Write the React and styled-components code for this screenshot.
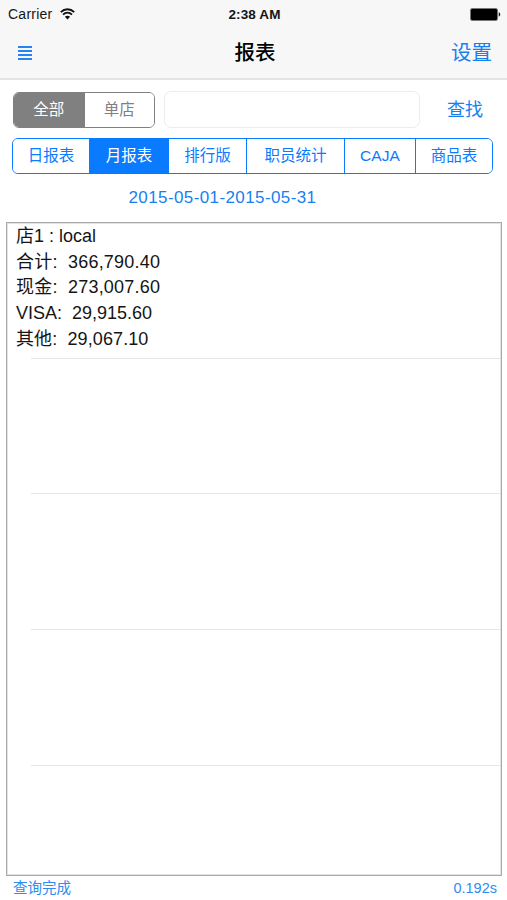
import React, {useState} from 'react';
import styled, {createGlobalStyle} from 'styled-components';

const GlobalStyle = createGlobalStyle`
    * {
        box-sizing: border-box;
    }

    body {
        margin: 0;
        background: #fff;
        font-family: "Liberation Sans", "Noto Sans CJK SC", sans-serif;
        color: #151515;
    }

    button, input {
        font-family: inherit;
        padding: 0;
        margin: 0;
    }
`

const Screen = styled.div`
    width: 507px;
    height: 900px;
    display: flex;
    flex-direction: column;
    overflow: hidden;
`

const Header = styled.header`
    height: 80px;
    flex: none;
    background: #f7f7f7;
    border-bottom: 2px solid #e4e4e4;
`

const StatusBar = styled.div`
    height: 28px;
    padding: 0 6px 0 8px;
    display: grid;
    grid-template-columns: 1fr auto 1fr;
    align-items: center;
    font-size: 14px;
`

const Carrier = styled.div`
    display: flex;
    align-items: center;
    gap: 7px;
    letter-spacing: 0.25px;
`

const Clock = styled.div`
    font-weight: bold;
    font-size: 13.5px;
    letter-spacing: 0.1px;
`

const BatteryCont = styled.div`
    display: flex;
    justify-content: flex-end;
`

const NavBar = styled.nav`
    height: 50px;
    padding: 0 15px 0 18px;
    display: grid;
    grid-template-columns: 1fr auto 1fr;
    align-items: center;
`

const MenuButton = styled.button`
    width: 14px;
    height: 14px;
    border: 0;
    background: none;
    line-height: 0;
`

const Title = styled.h1`
    margin: 0;
    font-size: 20.5px;
    font-weight: 500;
    line-height: 30px;
    color: #000;
`

const TextButton = styled.button`
    border: 0;
    background: none;
    color: #187ff0;
    font-size: ${props => props.$size}px;
    line-height: 30px;
    justify-self: end;
`

const SearchRow = styled.div`
    height: 37px;
    margin: 11px 24px 10px 13px;
    display: flex;
    align-items: center;
    flex: none;
`

const Segments = styled.div`
    display: flex;
    flex: none;
    width: ${props => props.$width}px;
    height: ${props => props.$height}px;
    border: 1.5px solid ${props => props.$tint};
    border-radius: 6px;
    overflow: hidden;
`

const Segment = styled.button`
    flex: ${props => props.$width} 1 0;
    border: 0;
    border-left: ${props => props.$first ? 0 : 1}px solid ${props => props.$tint};
    background: ${props => props.$active ? props.$tint : '#fff'};
    color: ${props => props.$active ? '#fff' : props.$tint};
    font-size: 15.5px;
    line-height: 22px;
    white-space: nowrap;
`

const SearchInput = styled.input`
    width: 256px;
    height: 37px;
    margin-left: 9px;
    border: 1px solid #ececec;
    border-radius: 7px;
    background: #fff;
    outline: none;
`

const SearchButton = styled(TextButton)`
    margin-left: auto;
`

const TabsCont = styled.div`
    padding-left: 12px;
`

const DateRange = styled.div`
    height: 48px;
    padding-right: 62px;
    flex: none;
    display: flex;
    align-items: center;
    justify-content: center;
    color: #187ff0;
    font-size: 17px;
    letter-spacing: 0.4px;
`

const ReportList = styled.div`
    height: 654px;
    margin: 0 5px 0 6px;
    flex: none;
    border: 1px solid #aaa;
    outline: 1px solid #e2e2e2;
    outline-offset: -2px;
    overflow: hidden;
`

const ReportCell = styled.div`
    height: 135.7px;
    padding-left: 9px;
    display: flex;
    flex-direction: column;
    justify-content: flex-start;

    &::after {
        content: "";
        flex: none;
        height: 1px;
        margin: auto 0 0 15px;
        background: #e6e6e6;
    }
`

const ReportLine = styled.div`
    height: 25.7px;
    line-height: 26px;
    font-size: 18px;
    letter-spacing: ${props => props.$spacing || 0}px;
    white-space: pre;
`

const Footer = styled.footer`
    flex: 1;
    padding: 0 10px 0 13px;
    display: flex;
    align-items: center;
    justify-content: space-between;
    color: #2e8bf0;
    font-size: 14.5px;
    line-height: 22px;
`

const scopes = [
    {label: '全部', width: 71},
    {label: '单店', width: 71},
]

const tabs = [
    {label: '日报表', width: 77},
    {label: '月报表', width: 79},
    {label: '排行版', width: 78},
    {label: '职员统计', width: 98},
    {label: 'CAJA', width: 71},
    {label: '商品表', width: 77},
]

const report = [
    {text: '店1 : local', spacing: 0},
    {text: '合计:  366,790.40', spacing: 0.2},
    {text: '现金:  273,007.60', spacing: 0.2},
    {text: 'VISA:  29,915.60', spacing: 0},
    {text: '其他:  29,067.10', spacing: 0.1},
]

const WifiIcon = () => (
    <svg width="15" height="12" viewBox="0 0 15 12" fill="none" stroke="#111">
        <path d="M0.8 4.1C4.6 0.3 10.4 0.3 14.2 4.1" strokeWidth="1.8"/>
        <path d="M3 6.6C5.6 4.1 9.4 4.1 12 6.6" strokeWidth="1.8"/>
        <path d="M7.5 11.4L4.9 8.8C6.4 7.4 8.6 7.4 10.1 8.8Z" fill="#111" stroke="none"/>
    </svg>
)

const BatteryIcon = () => (
    <svg width="31" height="13" viewBox="0 0 31 13">
        <rect x="0.5" y="0.5" width="27" height="12" rx="1.8" fill="#000" stroke="#777"/>
        <path d="M28.7 4.3C30.8 4.8 30.8 8.2 28.7 8.7Z" fill="#222"/>
    </svg>
)

const MenuIcon = () => (
    <svg width="14" height="14" viewBox="0 0 14 14" fill="#2583f2">
        <rect y="0" width="14" height="2"/>
        <rect y="4" width="14" height="2"/>
        <rect y="8" width="14" height="2"/>
        <rect y="12" width="14" height="2"/>
    </svg>
)

const SegmentedControl = ({items, value, onChange, tint, width, height}) => (
    <Segments $tint={tint} $width={width} $height={height}>
        {items.map((item, i) => (
            <Segment
                key={item.label}
                $first={i === 0}
                $active={value === i}
                $tint={tint}
                $width={item.width}
                onClick={() => onChange(i)}
            >
                {item.label}
            </Segment>
        ))}
    </Segments>
)

const App = () => {

    const [scope, setScope] = useState(0);
    const [tab, setTab] = useState(1);

    return ( <>
        <GlobalStyle/>
        <Screen>
            <Header>
                <StatusBar>
                    <Carrier>Carrier <WifiIcon/></Carrier>
                    <Clock>2:38 AM</Clock>
                    <BatteryCont><BatteryIcon/></BatteryCont>
                </StatusBar>
                <NavBar>
                    <MenuButton><MenuIcon/></MenuButton>
                    <Title>报表</Title>
                    <TextButton $size={20.5}>设置</TextButton>
                </NavBar>
            </Header>
            <SearchRow>
                <SegmentedControl items={scopes} value={scope} onChange={setScope} tint="#808080" width={142} height={36}/>
                <SearchInput/>
                <SearchButton $size={18}>查找</SearchButton>
            </SearchRow>
            <TabsCont>
                <SegmentedControl items={tabs} value={tab} onChange={setTab} tint="#0a7aff" width={481} height={36}/>
            </TabsCont>
            <DateRange>2015-05-01-2015-05-31</DateRange>
            <ReportList>
                <ReportCell>
                    {report.map(line => (
                        <ReportLine key={line.text} $spacing={line.spacing}>{line.text}</ReportLine>
                    ))}
                </ReportCell>
                <ReportCell/>
                <ReportCell/>
                <ReportCell/>
                <ReportCell/>
            </ReportList>
            <Footer>
                <span>查询完成</span>
                <span>0.192s</span>
            </Footer>
        </Screen>
    </>)
}

export default App
